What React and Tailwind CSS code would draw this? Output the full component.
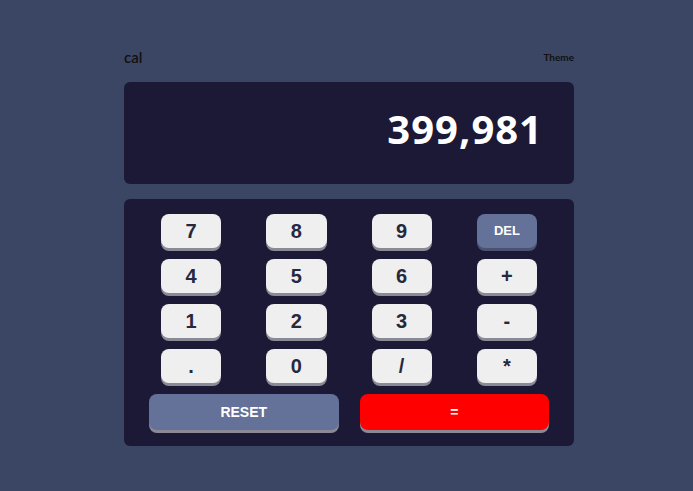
export default function App() {
  const keys = ['7', '8', '9', 'DEL', '4', '5', '6', '+', '1', '2', '3', '-', '.', '0', '/', '*'];

  return (
    <div className="min-h-screen w-full bg-[#3a4664] pt-[47px]">
      <div className="ml-[124px] w-[450px]">
        {/* Header */}
        <div className="flex justify-between items-start">
          <span className="text-[15px] leading-[20px] font-semibold text-[#111111] font-['Lato',sans-serif]">cal</span>
          <span className="text-[10px] leading-[20px] font-bold text-[#111111] font-['Lato',sans-serif]">Theme</span>
        </div>

        {/* Display */}
        <div className="mt-[15px] h-[102px] rounded-[6px] bg-[#1c1936] flex items-center justify-end pr-[31px] pb-[8px]">
          <span className="text-[40px] font-bold text-white font-['Open_Sans',sans-serif] tracking-[1px]">399,981</span>
        </div>

        {/* Keypad */}
        <div className="mt-[15px] rounded-[6px] bg-[#1c1936] pt-[15px] pb-[13px] px-[25px]">
          <div className="grid grid-cols-4 gap-x-[45px] gap-y-[8px] px-[12px]">
            {keys.map((k) => (
              <button
                key={k}
                className={
                  k === 'DEL'
                    ? "h-[34px] mb-[3px] rounded-[8px] bg-[#647198] text-white text-[13px] font-bold shadow-[0_3px_0_#4a5270] font-['Liberation_Sans',sans-serif]"
                    : "h-[34px] mb-[3px] rounded-[8px] bg-[#efefef] text-[#26283e] text-[20px] font-bold shadow-[0_3px_0_#8a8a97] font-['Liberation_Sans',sans-serif]"
                }
              >
                {k}
              </button>
            ))}
          </div>
          <div className="grid grid-cols-2 gap-x-[21px] mt-[8px]">
            <button className="h-[36px] mb-[3px] rounded-[8px] bg-[#647198] text-white text-[14px] font-bold shadow-[0_3px_0_#8a8a97] font-['Liberation_Sans',sans-serif]">
              RESET
            </button>
            <button className="h-[36px] mb-[3px] rounded-[8px] bg-[#ff0000] text-white text-[14px] font-bold shadow-[0_3px_0_#8a8a97] font-['Liberation_Sans',sans-serif]">
              =
            </button>
          </div>
        </div>
      </div>
    </div>
  );
}
